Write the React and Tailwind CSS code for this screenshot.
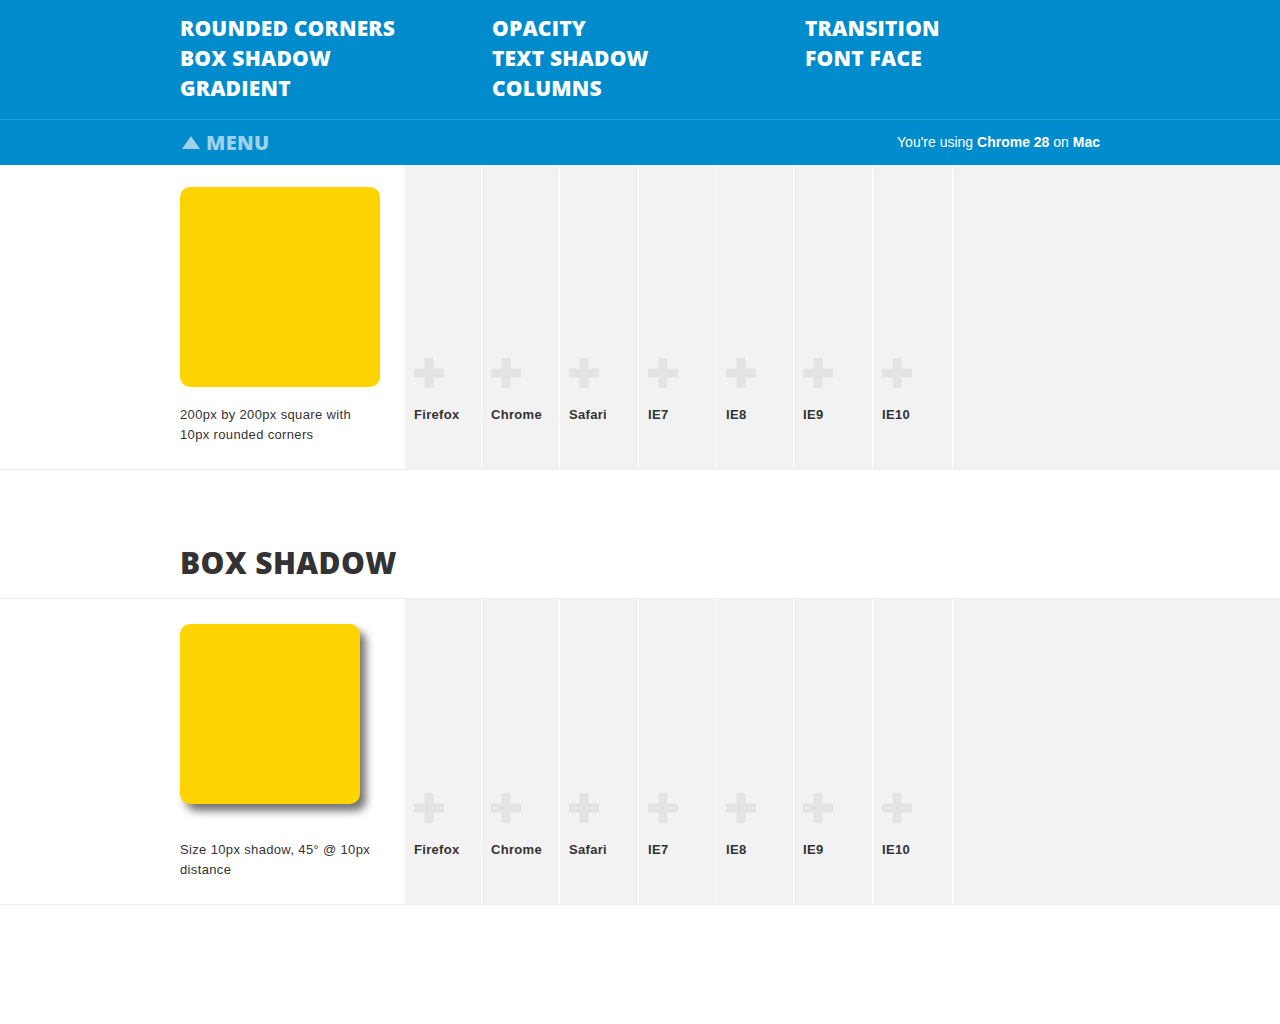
const navColumns = [
  ["ROUNDED CORNERS", "BOX SHADOW", "GRADIENT"],
  ["OPACITY", "TEXT SHADOW", "COLUMNS"],
  ["TRANSITION", "FONT FACE"],
];

// column widths include the white divider on the right
const browsers = [
  { name: "Firefox", w: "w-[77px]" },
  { name: "Chrome", w: "w-[78px]" },
  { name: "Safari", w: "w-[79px]" },
  { name: "IE7", w: "w-[78px]" },
  { name: "IE8", w: "w-[77px]" },
  { name: "IE9", w: "w-[79px]" },
  { name: "IE10", w: "w-[80px]" },
];

const headFont = { fontFamily: '"Open Sans", "Liberation Sans", sans-serif' };

function Plus() {
  return (
    <svg width="30" height="30" viewBox="0 0 30 30">
      <rect x="0" y="10.5" width="30" height="9" fill="#e4e4e4" />
      <rect x="10.5" y="0" width="9" height="30" fill="#e4e4e4" />
    </svg>
  );
}

function DemoRow({ box, caption, top }) {
  return (
    <div className="flex border-b border-[#ececec] h-full">
      <div className={`w-[405px] shrink-0 pl-[180px] pr-[20px] flex flex-col pb-[24px] ${top}`}>
        {box}
        <p className="mt-auto text-[13px] leading-[20px] tracking-[0.35px] text-[#333]">
          {caption}
        </p>
      </div>
      <div className="flex-1 flex bg-[#f2f2f2]">
        {browsers.map(({ name, w }) => (
          <div
            key={name}
            className={`${w} border-r-[1.5px] border-white flex flex-col justify-end pb-[44px] pl-[9px]`}
          >
            <Plus />
            <div className="mt-[17px] text-[13px] leading-[20px] tracking-[0.3px] font-bold text-[#333]">
              {name}
            </div>
          </div>
        ))}
      </div>
    </div>
  );
}

export default function App() {
  return (
    <div className="min-h-[1024px] bg-white" style={{ fontFamily: '"Liberation Sans", Arial, sans-serif' }}>
      <header className="bg-[#008ccc]">
        <nav className="w-[920px] mx-auto grid grid-cols-[312px_313px_295px] pt-[13px] pb-[16px]" style={headFont}>
          {navColumns.map((col, i) => (
            <ul key={i} className="flex flex-col">
              {col.map((item) => (
                <li key={item} className="text-[21px] leading-[30px] font-extrabold text-white tracking-[0.2px]">
                  {item}
                </li>
              ))}
            </ul>
          ))}
        </nav>
        <div className="border-t border-[#2a9fd6]">
          <div className="w-[920px] mx-auto h-[45px] flex items-center justify-between">
            <div className="flex items-center gap-[6px] pl-[2px]">
              <svg width="18" height="13" viewBox="0 0 18 13">
                <polygon points="9,0 18,13 0,13" fill="#9fd1ea" />
              </svg>
              <span className="text-[20px] font-extrabold text-[#9fd1ea] tracking-[0.3px]" style={headFont}>
                MENU
              </span>
            </div>
            <div className="text-[14px] text-white">
              You're using <b>Chrome 28</b> on <b>Mac</b>
            </div>
          </div>
        </div>
      </header>

      <section className="h-[305px]">
        <DemoRow
          top="pt-[22px]"
          box={<div className="w-[200px] h-[200px] rounded-[10px] bg-[#ffd400]" />}
          caption={
            <>
              200px by 200px square with
              <br />
              10px rounded corners
            </>
          }
        />
      </section>

      <h2
        className="w-[920px] mx-auto pt-[71px] pb-[14px] text-[30px] leading-[43px] font-extrabold tracking-[0.4px] text-[#333]"
        style={headFont}
      >
        BOX SHADOW
      </h2>

      <section className="h-[307px] border-t border-[#ececec]">
        <DemoRow
          top="pt-[25px]"
          box={
            <div className="w-[180px] h-[180px] rounded-[10px] bg-[#ffd400] shadow-[6px_7px_8px_rgba(0,0,0,0.55)]" />
          }
          caption={
            <>
              Size 10px shadow, 45° @ 10px
              <br />
              distance
            </>
          }
        />
      </section>
    </div>
  );
}
